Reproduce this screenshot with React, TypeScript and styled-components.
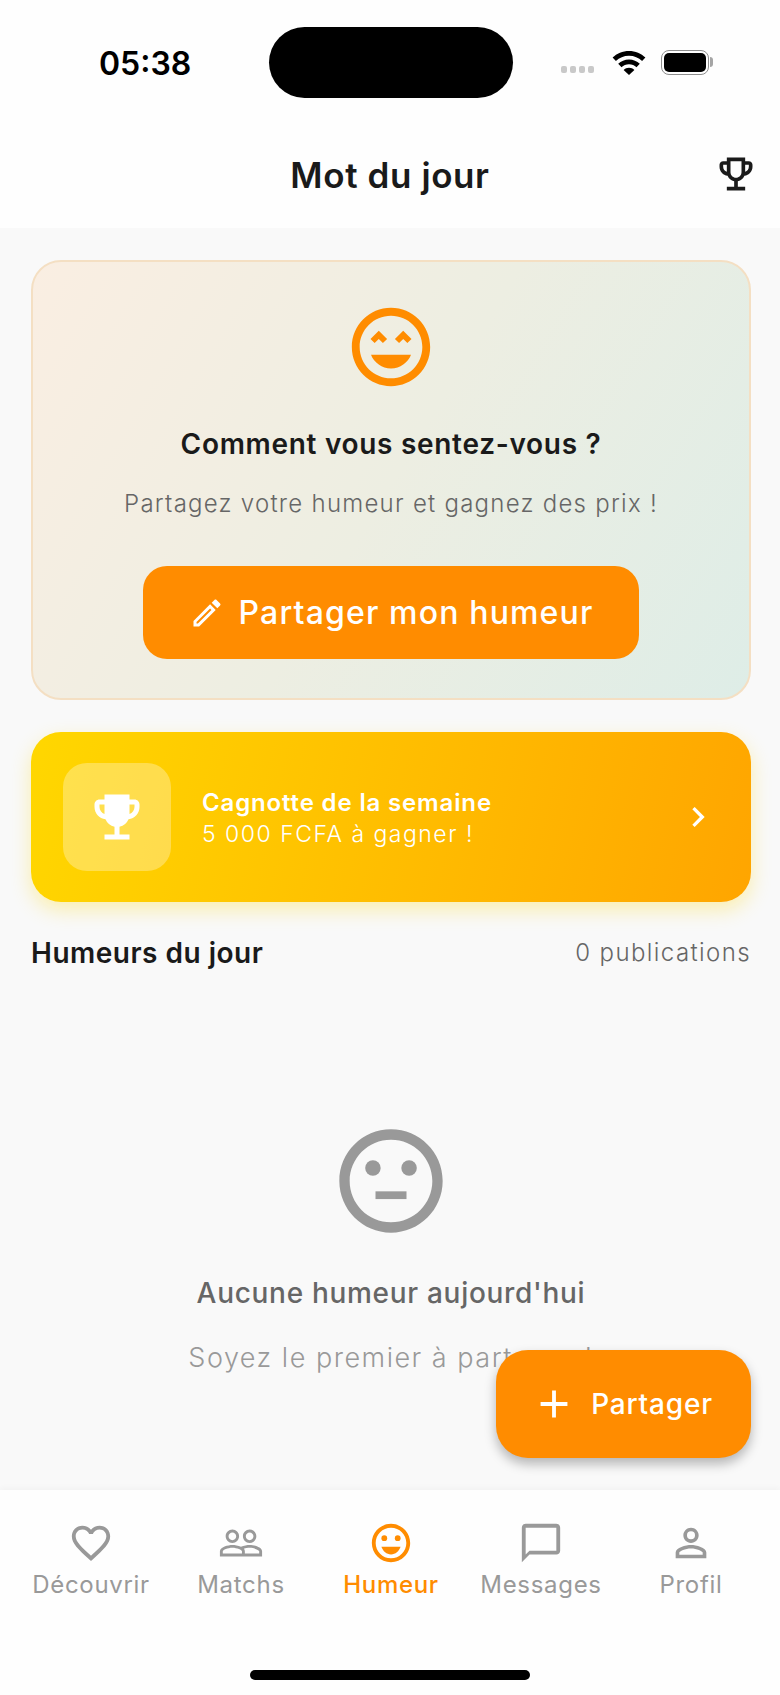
import { createGlobalStyle } from 'styled-components';
import styled from 'styled-components';
import {
  MdAdd,
  MdChatBubbleOutline,
  MdChevronRight,
  MdEmojiEvents,
  MdFavoriteBorder,
  MdOutlineEdit,
  MdOutlineEmojiEmotions,
  MdOutlineEmojiEvents,
  MdOutlineSentimentNeutral,
  MdPeopleOutline,
  MdPersonOutline,
} from 'react-icons/md';

const ORANGE = '#ff8c00';
const FONT = 'Inter, "Noto Sans", sans-serif';

const GlobalStyle = createGlobalStyle`
  html, body {
    margin: 0;
    padding: 0;
    background: #fefefe;
  }
  * {
    box-sizing: border-box;
  }
`;

const Screen = styled.div`
  position: relative;
  width: 780px;
  height: 1695px;
  display: flex;
  flex-direction: column;
  overflow: hidden;
  background: #f9f9f9;
  font-family: ${FONT};
`;

const TopArea = styled.header`
  height: 228px;
  flex: none;
  display: flex;
  flex-direction: column;
  background: #fefefe;
`;

const StatusBar = styled.div`
  height: 125px;
  padding: 27px 63px 0 99px;
  display: flex;
  align-items: flex-start;
`;

const Clock = styled.span`
  width: 170px;
  margin-top: 18px;
  font-size: 32px;
  line-height: 38px;
  font-weight: 600;
  color: #000;
`;

const Island = styled.div`
  width: 244px;
  height: 71px;
  border-radius: 36px;
  background: #000;
`;

const StatusIcons = styled.div`
  margin-left: 48px;
  height: 71px;
  flex: 1;
  display: flex;
  align-items: center;
`;

const SignalDots = styled.div`
  display: flex;
  gap: 3px;
  margin-top: 13px;
  margin-right: 18px;
`;

const SignalDot = styled.i`
  width: 6px;
  height: 7px;
  border-radius: 2px;
  background: #c9c9c9;
`;

const Battery = styled.div`
  position: relative;
  margin-left: 15px;
  width: 48px;
  height: 25px;
  padding: 2px;
  border: 1.5px solid #8d8d8d;
  border-radius: 8px;

  &::before {
    content: '';
    display: block;
    height: 100%;
    border-radius: 5px;
    background: #000;
  }

  &::after {
    content: '';
    position: absolute;
    top: 6px;
    right: -5px;
    width: 3px;
    height: 10px;
    border-radius: 0 3px 3px 0;
    background: #a5a5a5;
  }
`;

const TitleBar = styled.div`
  flex: 1;
  position: relative;
  display: flex;
  align-items: flex-start;
  justify-content: center;
`;

const Title = styled.h1`
  margin: 25px 0 0;
  font-size: 35px;
  line-height: 50px;
  font-weight: 600;
  letter-spacing: 0.6px;
  color: #1a1a1a;
`;

const TitleAction = styled.span`
  position: absolute;
  top: 27px;
  right: 22px;
  display: flex;
  color: #1a1a1a;
`;

const Content = styled.main`
  flex: 1;
  padding: 32px 29px 0 31px;
  display: flex;
  flex-direction: column;
`;

const MoodCard = styled.section`
  height: 440px;
  padding-top: 38px;
  display: flex;
  flex-direction: column;
  align-items: center;
  border: 2px solid #f4dfc3;
  border-radius: 30px;
  background: linear-gradient(121deg, #faeee2 0%, #edeee2 50%, #deede7 100%);
  color: ${ORANGE};
`;

const MoodTitle = styled.h2`
  margin: 30px 0 0;
  font-size: 28px;
  line-height: 40px;
  font-weight: 600;
  letter-spacing: 0.7px;
  color: #1a1a1a;
`;

const MoodText = styled.p`
  margin: 20px 0 0;
  font-size: 24px;
  line-height: 40px;
  font-weight: 300;
  letter-spacing: 1.25px;
  color: #666;
`;

const ShareButton = styled.button`
  width: 496px;
  height: 93px;
  margin-top: 42px;
  padding: 0;
  display: flex;
  align-items: center;
  justify-content: center;
  gap: 14px;
  border: 0;
  border-radius: 24px;
  background: ${ORANGE};
  color: #fff;
  font-family: ${FONT};
  font-size: 32px;
  font-weight: 500;
  letter-spacing: 1.15px;
`;

const PrizeBanner = styled.section`
  height: 170px;
  margin-top: 32px;
  padding: 0 33px 0 32px;
  display: flex;
  align-items: center;
  border-radius: 30px;
  background: linear-gradient(103deg, #ffd700 0%, #ffa500 100%);
  box-shadow: 0 8px 20px rgba(255, 215, 0, 0.3);
  color: #fff;
`;

const PrizeIcon = styled.div`
  width: 108px;
  height: 108px;
  flex: none;
  display: flex;
  align-items: center;
  justify-content: center;
  border-radius: 24px;
  background: rgba(255, 255, 255, 0.3);
`;

const PrizeText = styled.div`
  flex: 1;
  margin-left: 31px;
  padding-top: 2px;
  display: flex;
  flex-direction: column;
`;

const PrizeTitle = styled.strong`
  font-size: 24px;
  line-height: 32px;
  font-weight: 600;
  letter-spacing: 0.85px;
`;

const PrizeAmount = styled.span`
  font-size: 23px;
  line-height: 31px;
  font-weight: 300;
  letter-spacing: 1.5px;
`;

const SectionHead = styled.div`
  margin-top: 32px;
  display: flex;
  align-items: center;
  justify-content: space-between;
`;

const SectionTitle = styled.h3`
  margin: 0;
  font-size: 28px;
  line-height: 38px;
  font-weight: 600;
  letter-spacing: 0.5px;
  color: #1a1a1a;
`;

const SectionCount = styled.span`
  font-size: 24px;
  line-height: 38px;
  font-weight: 300;
  letter-spacing: 1.4px;
  color: #666;
`;

const EmptyState = styled.div`
  margin-top: 147px;
  display: flex;
  flex-direction: column;
  align-items: center;
  color: #999;
`;

const EmptyTitle = styled.h4`
  margin: 29px 0 0;
  font-size: 28px;
  line-height: 42px;
  font-weight: 500;
  letter-spacing: 0.7px;
  color: #666;
`;

const EmptyText = styled.p`
  margin: 23px 0 0;
  font-size: 27px;
  line-height: 42px;
  font-weight: 300;
  letter-spacing: 1.5px;
  color: #999;
`;

const Fab = styled.button`
  position: absolute;
  top: 1350px;
  left: 496px;
  width: 255px;
  height: 108px;
  padding: 0 3px 0 0;
  display: flex;
  align-items: center;
  justify-content: center;
  gap: 14px;
  border: 0;
  border-radius: 32px;
  background: ${ORANGE};
  box-shadow: 0 6px 12px rgba(0, 0, 0, 0.28);
  color: #fff;
  font-family: ${FONT};
  font-size: 28px;
  font-weight: 500;
  letter-spacing: 0.8px;
`;

const BottomNav = styled.nav`
  height: 205px;
  flex: none;
  display: flex;
  flex-direction: column;
  align-items: center;
  background: #fefefe;
  box-shadow: 0 -2px 6px rgba(0, 0, 0, 0.03);
`;

const NavRow = styled.div`
  width: 752px;
  padding: 30px 0 0 2px;
  display: grid;
  grid-template-columns: repeat(5, 150px);
`;

const NavItem = styled.div<{ $active?: boolean }>`
  display: flex;
  flex-direction: column;
  align-items: center;
  gap: 3px;
  color: ${(p) => (p.$active ? ORANGE : '#999')};
  font-size: 24px;
  line-height: 32px;
  font-weight: ${(p) => (p.$active ? 500 : 400)};
  letter-spacing: 0.7px;
`;

const HomeIndicator = styled.div`
  width: 280px;
  height: 10px;
  margin-top: 69px;
  border-radius: 5px;
  background: #000;
`;

const navItems = [
  { label: 'Découvrir', Icon: MdFavoriteBorder },
  { label: 'Matchs', Icon: MdPeopleOutline },
  { label: 'Humeur', Icon: MdOutlineEmojiEmotions, active: true },
  { label: 'Messages', Icon: MdChatBubbleOutline },
  { label: 'Profil', Icon: MdPersonOutline },
];

function WifiIcon() {
  return (
    <svg width="34" height="24" viewBox="0 0 34 24" fill="#000">
      <path d="M17 0C10.6 0 4.8 2.5.6 6.6l3.3 3.5C7.3 6.8 11.9 4.8 17 4.8s9.7 2 13.1 5.3l3.3-3.5C29.2 2.5 23.4 0 17 0z" />
      <path d="M17 8.4c-4.2 0-8 1.6-10.8 4.3l3.3 3.5c2-1.8 4.6-3 7.5-3s5.5 1.2 7.5 3l3.3-3.5C25 10 21.2 8.4 17 8.4z" />
      <path d="M17 16.8c-2.1 0-4 .8-5.4 2.1L17 24l5.4-5.1c-1.4-1.3-3.3-2.1-5.4-2.1z" />
    </svg>
  );
}

// peaked eyes with an open, filled mouth
function HappyFaceIcon() {
  return (
    <svg width="94" height="94" viewBox="0 0 24 24" fill="currentColor">
      <path d="M11.99 2C6.47 2 2 6.47 2 12s4.47 10 9.99 10S22 17.53 22 12 17.52 2 11.99 2zM12 20c-4.42 0-8-3.58-8-8s3.58-8 8-8 8 3.58 8 8-3.58 8-8 8z" />
      <path d="M8.88 7.82 6.76 9.94 7.82 11l1.06-1.06L9.94 11 11 9.94z" />
      <path d="M15.12 7.82 13 9.94 14.06 11l1.06-1.06L16.18 11l1.06-1.06z" />
      <path d="M12 17.5c2.33 0 4.31-1.46 5.11-3.5H6.89c.8 2.04 2.78 3.5 5.11 3.5z" />
    </svg>
  );
}

export default function App() {
  return (
    <Screen>
      <GlobalStyle />
      <TopArea>
        <StatusBar>
          <Clock>05:38</Clock>
          <Island />
          <StatusIcons>
            <SignalDots>
              <SignalDot />
              <SignalDot />
              <SignalDot />
              <SignalDot />
            </SignalDots>
            <WifiIcon />
            <Battery />
          </StatusIcons>
        </StatusBar>
        <TitleBar>
          <Title>Mot du jour</Title>
          <TitleAction>
            <MdOutlineEmojiEvents size={44} />
          </TitleAction>
        </TitleBar>
      </TopArea>

      <Content>
        <MoodCard>
          <HappyFaceIcon />
          <MoodTitle>Comment vous sentez-vous ?</MoodTitle>
          <MoodText>Partagez votre humeur et gagnez des prix !</MoodText>
          <ShareButton>
            <MdOutlineEdit size={36} />
            Partager mon humeur
          </ShareButton>
        </MoodCard>

        <PrizeBanner>
          <PrizeIcon>
            <MdEmojiEvents size={60} />
          </PrizeIcon>
          <PrizeText>
            <PrizeTitle>Cagnotte de la semaine</PrizeTitle>
            <PrizeAmount>5 000 FCFA à gagner !</PrizeAmount>
          </PrizeText>
          <MdChevronRight size={40} />
        </PrizeBanner>

        <SectionHead>
          <SectionTitle>Humeurs du jour</SectionTitle>
          <SectionCount>0 publications</SectionCount>
        </SectionHead>

        <EmptyState>
          <MdOutlineSentimentNeutral size={124} />
          <EmptyTitle>Aucune humeur aujourd'hui</EmptyTitle>
          <EmptyText>Soyez le premier à partager !</EmptyText>
        </EmptyState>
      </Content>

      <Fab>
        <MdAdd size={46} />
        Partager
      </Fab>

      <BottomNav>
        <NavRow>
          {navItems.map(({ label, Icon, active }) => (
            <NavItem key={label} $active={active}>
              <Icon size={46} />
              {label}
            </NavItem>
          ))}
        </NavRow>
        <HomeIndicator />
      </BottomNav>
    </Screen>
  );
}
